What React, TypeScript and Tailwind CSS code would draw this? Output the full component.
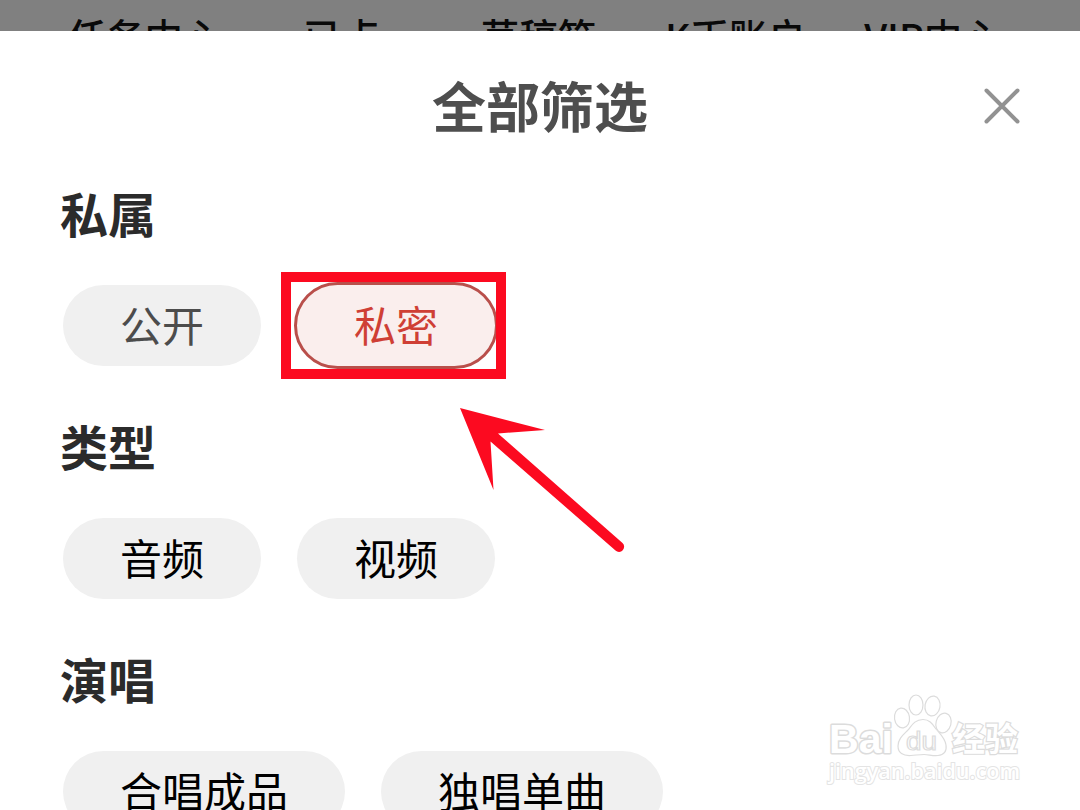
import type { ReactNode } from "react";

const tabs = ["任务中心", "已点", "草稿箱", "K币账户", "VIP中心"];

function Chip({ children, muted = false }: { children: ReactNode; muted?: boolean }) {
  return (
    <button
      className={`flex h-[81px] items-center rounded-full bg-[#f0f0f0] px-[57px] pb-[3px] text-[42px] leading-none whitespace-nowrap ${
        muted ? "text-[#4c4c4c]" : "text-black"
      }`}
    >
      {children}
    </button>
  );
}

function SelectedChip({ children }: { children: ReactNode }) {
  return (
    <button className="relative -mx-[3px] -mt-px flex h-[87px] w-[204px] items-center justify-center rounded-full border-[3px] border-[#b94f4b] bg-[#faeeed] pb-[3px] text-[42px] leading-none text-[#cf3f35]">
      {children}
      <span className="absolute -top-[13px] -right-[11px] -bottom-[13px] -left-4 border-[10px] border-[#fc0a20]" />
    </button>
  );
}

function Section({ title, children }: { title: string; children: ReactNode }) {
  return (
    <section className="h-[233px] shrink-0">
      <h2 className="ml-[-3px] h-[72px] text-[48px] leading-[63px] font-bold text-[#2b2b2b]">{title}</h2>
      <div className="mt-[32px] flex h-[81px] items-center gap-9">{children}</div>
    </section>
  );
}

function Watermark() {
  return (
    <svg
      className="absolute top-[680px] left-[810px]"
      width="230"
      height="120"
      fill="#fff"
      stroke="#dcdcdc"
      strokeWidth="1.2"
    >
      <text x="19" y="73" fontSize="41" fontWeight="bold" paintOrder="stroke" strokeWidth="3" strokeLinejoin="round" textLength="64" lengthAdjust="spacingAndGlyphs" fontFamily="'Liberation Sans', sans-serif">Bai</text>
      <ellipse cx="92" cy="38" rx="7.5" ry="10" transform="rotate(-8 92 38)" />
      <ellipse cx="106" cy="25" rx="7" ry="10" />
      <ellipse cx="122.500" cy="26" rx="7.500" ry="10" transform="rotate(10 122.500 26)" />
      <ellipse cx="133.500" cy="43" rx="7.500" ry="10" transform="rotate(15 133.500 43)" />
      <path d="M113 39.500C105 39.500 102 45 98 50C93 55 88 59 88 66C88 73 93 76 101 75.500C107 75 110 74.500 114 74.500C119 74.500 122 76 128 75.500C134 75 137 71 136 65C135 58 130 54 126 49C122 43 119 39.500 113 39.500Z" />
      <text x="96" y="70" fontSize="25" textLength="31" lengthAdjust="spacingAndGlyphs" fontFamily="'Liberation Sans', sans-serif">du</text>
      <text x="142" y="71" fontSize="33" fontWeight="bold" paintOrder="stroke" strokeWidth="2.400" fontFamily="'Noto Sans CJK SC', sans-serif">经验</text>
      <text x="19" y="99" fontSize="22" fontWeight="600" stroke="#e4e4e4" paintOrder="stroke" strokeWidth="2" textLength="191" lengthAdjust="spacingAndGlyphs" fontFamily="'Open Sans', 'Noto Sans', sans-serif">jingyan.baidu.com</text>
    </svg>
  );
}

export default function App() {
  return (
    <main className="relative flex h-[810px] w-[1080px] flex-col overflow-hidden bg-white font-['Noto_Sans_CJK_SC',sans-serif]">
      <nav className="grid h-[31px] shrink-0 grid-cols-[197px_197px_197px_197px_197px] overflow-hidden bg-[#808080] pl-[46px] text-[38.5px] leading-[38px] font-medium text-[#090909]">
        {tabs.map((tab) => (
          <span key={tab} className="-mx-2 pt-[16px] text-center whitespace-nowrap">{tab}</span>
        ))}
      </nav>
      <header className="flex h-[150px] shrink-0 items-center justify-center">
        <h1 className="pb-[2px] text-[54px] leading-[80px] font-bold text-[#4e4e4e]">全部筛选</h1>
        <button className="absolute top-[88px] right-[60px]" aria-label="关闭">
          <svg className="block" width="36" height="36" fill="none" stroke="#929292" strokeWidth="4" strokeLinecap="round">
            <path d="M2.500 2.500 33.500 33.500M33.500 2.500 2.500 33.500" />
          </svg>
        </button>
      </header>
      <div className="flex flex-col pl-[63px]">
        <Section title="私属">
          <Chip muted>公开</Chip>
          <SelectedChip>私密</SelectedChip>
        </Section>
        <Section title="类型">
          <Chip>音频</Chip>
          <Chip>视频</Chip>
        </Section>
        <Section title="演唱">
          <Chip>合唱成品</Chip>
          <Chip>独唱单曲</Chip>
        </Section>
      </div>
      <svg className="absolute top-[390px] left-[440px]" width="200" height="180" fill="#fc0a20">
        <path d="M20 18 105 40 58 43.500 182.500 153A5 5 0 0 1 175.500 160.500L50.500 51.500 53.500 100Z" />
      </svg>
      <Watermark />
    </main>
  );
}
